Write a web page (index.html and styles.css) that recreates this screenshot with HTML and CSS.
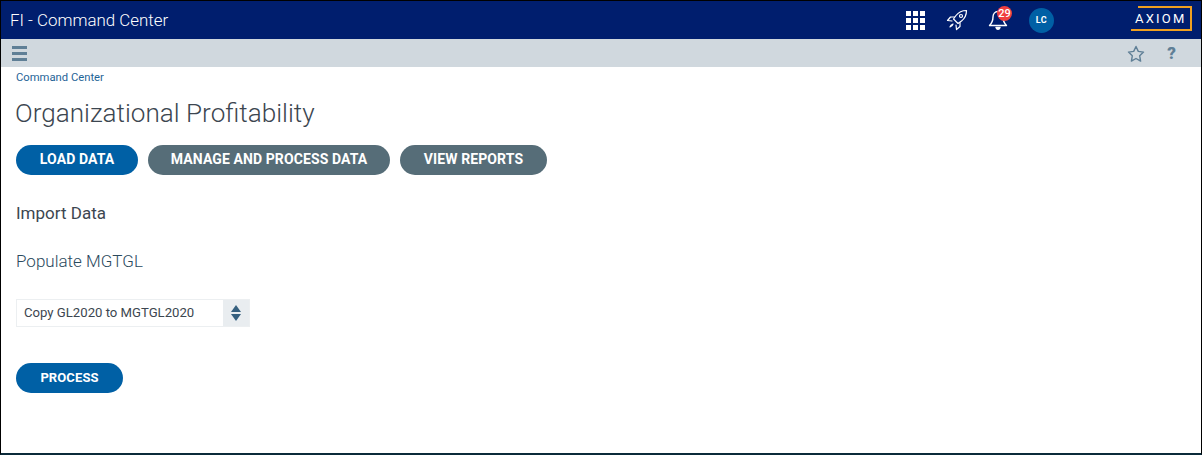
FILE: index.html
```html
<!DOCTYPE html>
<html>
<head lang="en">
    <meta charset="UTF-8">
    <title>FI - Command Center</title>
    <link rel="stylesheet" href="styles.css">
</head>
<body>
<div class="frame">
    <div class="topbar">
        <div class="app-title">FI - Command Center</div>
        <div class="top-icons">
            <div class="grid-icon">
                <i></i><i></i><i></i><i></i><i></i><i></i><i></i><i></i><i></i>
            </div>
            <svg class="rocket" width="22" height="22" viewBox="0 0 22 22" fill="none" stroke="#fff" stroke-width="1.2" stroke-linejoin="round" stroke-linecap="round">
                <path d="M20.500 1.500c-4.500 0-8 1.800-10.500 5L7.500 10l4.500 4.500 3.500-2.500c3.200-2.500 5-6 5-10.500z"/>
                <path d="M8.500 8H4.500L1.500 11.500l4.500.5"/>
                <path d="M14 13.500V17.500L10.500 20.500 10 16"/>
                <path d="M7 15c-1.500.5-2.500 1.500-3 3 1.500-.5 2.500-1.500 3-3z"/>
                <circle cx="15" cy="7" r="1.500"/>
            </svg>
            <div class="bell-wrap">
                <svg width="20" height="22" viewBox="0 0 20 22" fill="none" stroke="#fff" stroke-width="1.400" stroke-linejoin="round">
                    <path d="M10 2.500c-3.200 0-5 2.500-5 5.500 0 4-1.500 6.500-3.500 8.500h17c-2-2-3.500-4.500-3.500-8.500 0-3-1.800-5.500-5-5.500z"/>
                    <path d="M8 18.500c.4 1.200 1.100 1.800 2 1.800s1.600-.6 2-1.800z" fill="#fff"/>
                </svg>
                <span class="badge">29</span>
            </div>
            <div class="avatar">LC</div>
        </div>
        <div class="logo"><span class="logo-text">AXIOM</span></div>
    </div>
    <div class="subbar">
        <div class="hamburger"><i></i><i></i><i></i></div>
        <div class="sub-icons">
            <svg width="18" height="17" viewBox="0 0 18 17" fill="none" stroke="#5f7f96" stroke-width="1.400" stroke-linejoin="round">
                <path d="M9 1.500l2.300 4.900 5.200.7-3.800 3.700.9 5.300L9 13.500l-4.600 2.600.9-5.300L1.500 7.100l5.200-.7z"/>
            </svg>
            <span class="help">?</span>
        </div>
    </div>
    <div class="content">
        <div class="crumb">Command Center</div>
        <h1 class="page-title">Organizational Profitability</h1>
        <div class="tabs">
            <button class="pill blue tab-load">LOAD DATA</button>
            <button class="pill slate tab-manage">MANAGE AND PROCESS DATA</button>
            <button class="pill slate tab-view">VIEW REPORTS</button>
        </div>
        <div class="section-title">Import Data</div>
        <div class="sub-title">Populate MGTGL</div>
        <div class="select-box">
            <div class="select-text">Copy GL2020 to MGTGL2020</div>
            <div class="select-arrows">
                <svg width="10" height="16" viewBox="0 0 10 16" fill="#36607f">
                    <path d="M5 0l5 7H0z"/>
                    <path d="M0 9h10l-5 7z"/>
                </svg>
            </div>
        </div>
        <button class="pill blue process">PROCESS</button>
    </div>
</div>
</body>
</html>
```

FILE: styles.css
```css
*{
    box-sizing: border-box;
}
html,body{
    margin: 0;
    height: 100%;
}
body{
    font-family: Roboto, "Liberation Sans", sans-serif;
    background-color: #fff;
}
.frame{
    display: flex;
    flex-direction: column;
    width: 1202px;
    height: 455px;
    border: 1px solid #000;
    border-bottom: 2px solid #0b2b3a;
    overflow: hidden;
}
.topbar{
    display: flex;
    align-items: center;
    height: 38px;
    background-color: #001e6e;
    color: #fff;
}
.app-title{
    width: 893px;
    padding-left: 9px;
    font-size: 16.900px;
    font-weight: 300;
}
.top-icons{
    display: flex;
    align-items: center;
}
.grid-icon{
    display: grid;
    grid-template-columns: repeat(3, 5px);
    grid-auto-rows: 5px;
    gap: 2px;
    width: 19px;
    margin-left: 12px;
}
.grid-icon i{
    background-color: #fff;
}
.rocket{
    margin-left: 21px;
}
.bell-wrap{
    position: relative;
    width: 20px;
    height: 22px;
    margin-left: 20px;
}
.badge{
    position: absolute;
    top: -3px;
    left: 9px;
    width: 15px;
    height: 15px;
    border-radius: 50%;
    background-color: #f04040;
    font-size: 11px;
    font-weight: 500;
    line-height: 15px;
    text-align: center;
}
.avatar{
    width: 25px;
    height: 25px;
    margin-left: 21px;
    border-radius: 50%;
    background-color: #0060a5;
    font-size: 9px;
    font-weight: 700;
    line-height: 25px;
    text-align: center;
    letter-spacing: .5px;
}
.logo{
    position: relative;
    align-self: flex-start;
    width: 54px;
    height: 25px;
    margin-top: 5px;
    margin-left: 84px;
    border-top: 2px solid #f0a020;
    border-right: 2px solid #f0a020;
}
.logo::after{
    content: "";
    position: absolute;
    left: -7px;
    bottom: 0;
    width: 61px;
    height: 2px;
    background-color: #f0a020;
}
.logo-text{
    display: block;
    margin-top: 4px;
    margin-left: -3px;
    font-size: 13px;
    line-height: 14px;
    letter-spacing: 2.200px;
}
.subbar{
    display: flex;
    justify-content: space-between;
    align-items: center;
    height: 28px;
    background-color: #d0d8de;
}
.hamburger{
    display: flex;
    flex-direction: column;
    gap: 3px;
    width: 15px;
    margin-left: 11px;
}
.hamburger i{
    height: 3px;
    background-color: #5f7f96;
}
.sub-icons{
    display: flex;
    align-items: center;
    gap: 22px;
    margin-right: 25px;
}
.help{
    color: #5f7f96;
    font-size: 17px;
    font-weight: 900;
}
.content{
    padding: 0 15px;
}
.crumb{
    margin-top: 4px;
    color: #1f6497;
    font-size: 11.250px;
    line-height: 13px;
}
.page-title{
    margin: 13px 0 0 -1px;
    color: #3c4650;
    font-size: 26.100px;
    font-weight: 300;
    line-height: 33px;
}
.tabs{
    display: flex;
    gap: 10px;
    margin-top: 15px;
}
.pill{
    display: block;
    height: 30px;
    border: none;
    border-radius: 15px;
    color: #fff;
    font-family: inherit;
    font-size: 14px;
    font-weight: 700;
    letter-spacing: .1px;
    padding: 0 0 2px;
}
.blue{
    background-color: #0060a5;
}
.slate{
    background-color: #566d78;
}
.tab-load{
    width: 122px;
}
.tab-manage{
    width: 242px;
}
.tab-view{
    width: 147px;
}
.section-title{
    margin-top: 28px;
    color: #3c4650;
    font-size: 17px;
    line-height: 20px;
}
.sub-title{
    margin-top: 28px;
    color: #2b4a5e;
    font-size: 17px;
    font-weight: 300;
    line-height: 20px;
}
.select-box{
    display: flex;
    width: 234px;
    height: 28px;
    margin-top: 28px;
    border: 1px solid #eceff1;
}
.select-text{
    flex: 1;
    padding-left: 7px;
    color: #3c4650;
    font-size: 13.150px;
    line-height: 26px;
}
.select-arrows{
    display: flex;
    align-items: center;
    justify-content: center;
    width: 26px;
    background-color: #e9edf0;
}
.process{
    width: 107px;
    margin-top: 36px;
    font-size: 13px;
}
```
